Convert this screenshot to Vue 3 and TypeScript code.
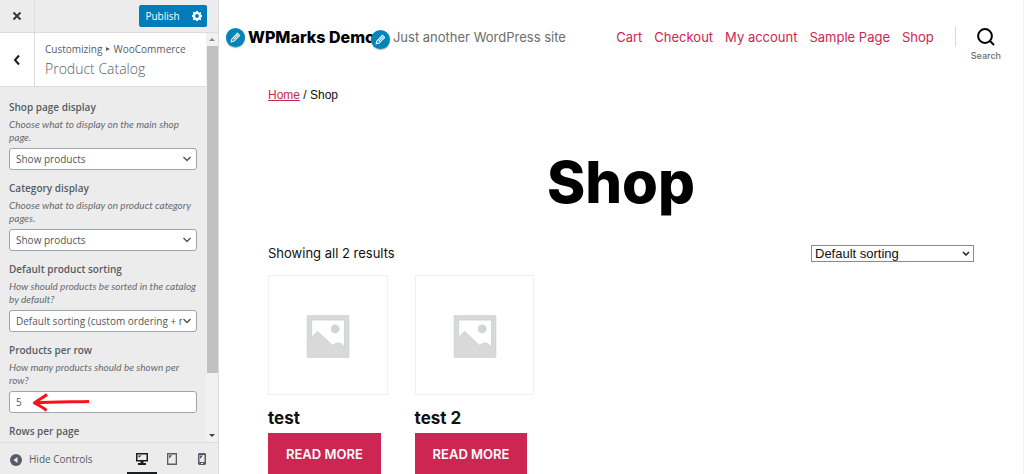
<script setup lang="ts">
import { ref } from 'vue'

interface Setting {
  id: string
  label: string
  help: string
  kind: 'select' | 'number'
  value: string
}

const settings = ref<Setting[]>([
  { id: 'shop-display', label: 'Shop page display', help: 'Choose what to display on the main shop page.', kind: 'select', value: 'Show products' },
  { id: 'category-display', label: 'Category display', help: 'Choose what to display on product category pages.', kind: 'select', value: 'Show products' },
  { id: 'default-sorting', label: 'Default product sorting', help: 'How should products be sorted in the catalog by default?', kind: 'select', value: 'Default sorting (custom ordering + name)' },
  { id: 'per-row', label: 'Products per row', help: 'How many products should be shown per row?', kind: 'number', value: '5' },
])
const links: string[] = ['Cart', 'Checkout', 'My account', 'Sample Page', 'Shop']
const products: string[] = ['test', 'test 2']
const sorting = ref('Default sorting')
</script>

<template>
  <div class="customizer">
    <aside class="sidebar">
      <header class="actions">
        <button class="close" type="button" aria-label="Close">
          <svg width="10" height="10" viewBox="0 0 10 10"><path d="M1.500 1.500l7 7M8.500 1.500l-7 7" /></svg>
        </button>
        <div class="publish-group">
          <button class="publish" type="button">Publish</button>
          <button class="gear" type="button" aria-label="Publish settings">
            <svg width="10" height="10" viewBox="0 0 20 20">
              <path fill="#fff" fill-rule="evenodd" d="M8 0h4l.6 2.800 1.700.7L16.500 2l2 2-1.300 2.300.8 1.700L20 8v4l-2.100.500-.7 1.700L18.500 16.500 16.500 18.500l-2.300-1.400-1.700.7L12 20H8l-.6-2.200-1.700-.7L3.500 18.500l-2-2 1.300-2.300-.7-1.700L0 12V8l2.100-.500.7-1.700L1.500 3.500l2-2 2.200 1.400 1.700-.7zM10 6.200a3.800 3.800 0 100 7.600 3.800 3.800 0 000-7.600z" />
            </svg>
          </button>
        </div>
      </header>

      <div class="panel-wrap">
        <div class="panel">
          <div class="panel-head">
            <button class="back" type="button" aria-label="Back">
              <svg width="8" height="12" viewBox="0 0 8 12"><path d="M6 1.500L2 6l4 4.500" /></svg>
            </button>
            <div class="titles">
              <p class="crumb">Customizing <span class="tri"></span> WooCommerce</p>
              <h3>Product Catalog</h3>
            </div>
          </div>
          <form class="settings" @submit.prevent>
            <div v-for="s in settings" :key="s.id" class="setting">
              <label :for="s.id">{{ s.label }}</label>
              <p class="help">{{ s.help }}</p>
              <div v-if="s.kind === 'select'" class="select">
                <select :id="s.id" v-model="s.value"><option>{{ s.value }}</option></select>
                <svg class="chev" width="10" height="6" viewBox="0 0 10 6"><path d="M1.500 1L5 4.500 8.500 1" /></svg>
              </div>
              <div v-else class="number">
                <input :id="s.id" v-model="s.value" type="text" inputmode="numeric">
                <svg class="arrow" width="58" height="20" viewBox="0 0 58 20"><path d="M57 9.500C40 10 20 9.500 3 11M15 2.500C11 5.500 6 8 2.500 11c4 2 8 4 12 7.500" /></svg>
              </div>
            </div>
            <div class="setting"><h4>Rows per page</h4></div>
          </form>
        </div>
        <div class="scrollbar">
          <span class="up"></span>
          <span class="thumb"></span>
          <span class="down"></span>
        </div>
      </div>

      <footer class="bottom">
        <button class="hide" type="button">
          <svg width="12" height="12" viewBox="0 0 12 12"><circle cx="6" cy="6" r="6" fill="#555d66" /><path d="M7.500 3v6L3.500 6z" fill="#eee" /></svg>
          Hide Controls
        </button>
        <div class="devices">
          <button class="device active" type="button" aria-label="Desktop">
            <svg width="12" height="12" viewBox="0 0 12 12"><path fill="#191e23" fill-rule="evenodd" d="M0 0h12v8.500H7.500V10H10v2H2v-2h2.500V8.500H0zM1.500 1.500V7h9V1.500zM2.500 2.500H6L2.500 4.500z" /></svg>
          </button>
          <button class="device" type="button" aria-label="Tablet">
            <svg width="10" height="12" viewBox="0 0 10 12"><path fill="#555d66" fill-rule="evenodd" d="M0 0h10v12H0zM1.300 1.500v9h7.400v-9zM2 2.200h3.500L2 5.500z" /></svg>
          </button>
          <button class="device" type="button" aria-label="Mobile">
            <svg width="8" height="12" viewBox="0 0 8 12"><path fill="#555d66" fill-rule="evenodd" d="M1 0h6l1 1v10l-1 1H1l-1-1V1zM1.500 2v7h5V2zM2 2.500h3L2 6zM3 10v1h2v-1z" /></svg>
          </button>
        </div>
      </footer>
    </aside>

    <main class="preview">
      <header class="site-head">
        <div class="brand">
          <div class="site-title">
            <button class="edit" type="button" aria-label="Edit site title">
              <svg width="13" height="13" viewBox="0 0 12 12"><path d="M2 10l.7-2.700L7.800 2.200l2 2L4.700 9.300zM6.700 3.300l2 2M4.300 7.700L7 5" /></svg>
            </button>
            <a href="#">WPMarks Demo</a>
          </div>
          <div class="tagline">
            <button class="edit" type="button" aria-label="Edit tagline">
              <svg width="13" height="13" viewBox="0 0 12 12"><path d="M2 10l.7-2.700L7.800 2.200l2 2L4.700 9.300zM6.700 3.300l2 2M4.300 7.700L7 5" /></svg>
            </button>
            Just another WordPress site
          </div>
        </div>
        <nav>
          <a v-for="l in links" :key="l" href="#">{{ l }}</a>
        </nav>
        <button class="search" type="button">
          <svg width="18" height="18" viewBox="0 0 18 18"><circle cx="8" cy="8" r="6.900" /><path d="M13 13l4 4" /></svg>
          <span>Search</span>
        </button>
      </header>

      <div class="content">
        <p class="trail"><a href="#">Home</a> / Shop</p>
        <h1>Shop</h1>
        <div class="toolbar">
          <p>Showing all 2 results</p>
          <div class="sort">
            <select v-model="sorting" aria-label="Shop order"><option>Default sorting</option></select>
            <svg width="8" height="5" viewBox="0 0 8 5"><path d="M1 1l3 3 3-3" /></svg>
          </div>
        </div>
        <ul class="products">
          <li v-for="p in products" :key="p">
            <div class="thumbnail">
              <svg viewBox="0 0 120 120">
                <path fill="#d8d9db" fill-rule="evenodd" d="M39 40.500h42.500V83H39zM43.500 45v17.500l6-6L65 71c4-4 8-3.500 12 1.500V45z" />
                <circle cx="67.500" cy="54" r="4.500" fill="#d3d4d6" />
                <path fill="none" stroke="#c6c8ca" stroke-width=".7" d="M39 40.500h42.500V83H39zM43.500 45H77v27.500c-4-5-8-5.500-12-1.500L49.500 56.500l-6 6z" />
              </svg>
            </div>
            <h2>{{ p }}</h2>
            <a class="more" href="#">READ MORE</a>
          </li>
        </ul>
      </div>
    </main>
  </div>
</template>

<style>
body { margin: 0; overflow: hidden; }
</style>

<style scoped>
* { box-sizing: border-box; }
p, h1, h2, h3, h4, ul { margin: 0; padding: 0; }
button { border: 0; background: none; padding: 0; font: inherit; color: inherit; cursor: pointer; }
svg { display: block; flex: none; }
a { color: #cd2653; text-decoration: none; }

.customizer { display: grid; grid-template-columns: 219px 1fr; height: 100vh; background: #fff; }

.sidebar { display: flex; flex-direction: column; min-height: 0; background: #ececec; border-right: 1px solid #ddd; color: #555d66; font: 10px/13px "Open Sans", "Noto Sans", sans-serif; }
.actions { display: flex; justify-content: space-between; align-items: center; height: 33px; padding-right: 11px; border-bottom: 1px solid #ddd; }
.close { display: grid; place-items: center; width: 35px; height: 32px; border-right: 1px solid #ddd; }
.close path { fill: none; stroke: #32373c; stroke-width: 2; }
.publish-group { display: flex; height: 22px; border-radius: 2px; background: #007cba; color: #fff; }
.publish { width: 47px; }
.gear { display: grid; place-items: center; width: 21px; }
.panel-wrap { display: flex; flex: 1; min-height: 0; }
.panel { flex: 1; min-width: 0; overflow: hidden; }
.panel-head { display: flex; height: 54px; background: #fff; border-bottom: 1px solid #ddd; }
.back { display: grid; place-items: center; width: 35px; border-right: 1px solid #ddd; }
.back path { fill: none; stroke: #191e23; stroke-width: 2; }
.titles { padding: 9px 0 0 10px; white-space: nowrap; }
.crumb { line-height: 15px; }
.tri { display: inline-block; margin: 0 1px; border: 2px solid transparent; border-left: 4px solid #555d66; border-right: 0; vertical-align: 2px; }
h3 { font-size: 14px; line-height: 24px; font-weight: 300; }
.settings { padding: 13px 9px 0; }
.setting { margin-bottom: 11px; }
label, h4 { display: block; font-size: 10px; line-height: 15px; font-weight: 600; }
.help { margin: 3px 0 4px; font: italic 10px/13px Lato, "Open Sans", sans-serif; color: #666b70; }
.setting select, .setting input { display: block; width: 100%; height: 22px; padding: 0 14px 0 6px; border: 1px solid #a0a5aa; border-radius: 3px; background: #fff; color: #50575e; font: inherit; appearance: none; }
.select, .number { position: relative; }
.chev { position: absolute; right: 5px; top: 8px; }
.chev path { fill: none; stroke: #555; stroke-width: 1.500; }
.arrow { position: absolute; left: 23px; top: 1px; }
.arrow path { fill: none; stroke: #f8131b; stroke-width: 3; stroke-linejoin: round; }
.scrollbar { display: flex; flex-direction: column; align-items: center; width: 12px; background: #f1f1f1; }
.up { margin: 5px 0; border: 3px solid transparent; border-top: 0; border-bottom: 3px solid #888; }
.thumb { width: 11px; flex: 0 0 80%; background: #c1c1c1; }
.down { margin: auto 0 5px; border: 3px solid transparent; border-bottom: 0; border-top: 3px solid #444; }
.bottom { display: flex; justify-content: space-between; height: 32px; border-top: 1px solid #ddd; }
.hide { display: flex; align-items: center; gap: 7px; padding: 2px 0 0 10px; }
.devices { display: flex; padding-right: 1px; }
.device { display: grid; place-items: center; width: 30px; padding-top: 2px; border-bottom: 2px solid transparent; }
.device.active { border-color: #191e23; }

.preview { min-width: 0; overflow: hidden; border-right: 1px solid #f3f3f3; color: #111; font-family: Inter, sans-serif; }
.site-head { display: flex; align-items: center; height: 73px; padding: 0 22px 0 29px; }
.brand { display: flex; align-items: center; gap: 18px; flex: 1; white-space: nowrap; }
.site-title, .tagline { position: relative; }
.site-title a { color: #000; font-size: 16px; line-height: 24px; font-weight: 800; }
.tagline { color: #6d6d6d; font-size: 13px; line-height: 20px; }
.edit { position: absolute; z-index: 1; left: -22px; top: 3px; display: grid; place-items: center; width: 19px; height: 19px; border-radius: 50%; background: #0085ba; box-shadow: 0 1px 1px #9ab; }
.edit path { fill: none; stroke: #fff; stroke-width: 1; }
nav { display: flex; gap: 12px; padding-right: 21px; font-size: 13px; line-height: 20px; white-space: nowrap; }
.search { display: flex; flex-direction: column; align-items: center; gap: 4px; padding: 15px 0 0 16px; color: #6d6d6d; font-size: 9px; line-height: 11px; font-weight: 500; background: linear-gradient(#dcd7ca, #dcd7ca) 0 14px / 1px 20px no-repeat; }
.search circle, .search path { fill: none; stroke: #000; stroke-width: 2; }
.content { padding: 14px 49px 0; }
.trail { font-family: "Liberation Sans", Arial, sans-serif; font-size: 12px; line-height: 16px; }
.trail a { text-decoration: underline; }
h1 { margin-top: 40px; color: #000; font-size: 58px; line-height: 78px; font-weight: 800; text-align: center; }
.toolbar { display: flex; justify-content: space-between; align-items: center; height: 24px; margin-top: 20px; font-size: 13px; }
.sort { position: relative; width: 163px; }
.sort select { display: block; width: 100%; height: 17px; padding: 0 3px; border: 1px solid #8a8a8a; border-radius: 0; background: #fff; color: #111; font: 13px/15px "Liberation Sans", Arial, sans-serif; appearance: none; }
.sort svg { position: absolute; right: 4px; top: 6px; }
.sort path { fill: none; stroke: #222; stroke-width: 1.500; }
.products { display: grid; grid-template-columns: repeat(5, 1fr); gap: 27px; margin-top: 10px; list-style: none; }
.thumbnail { border: 1px solid #f0f0f0; }
.thumbnail svg { width: 100%; }
h2 { margin: 11px 0 3px; font-size: 17px; line-height: 24px; font-weight: 700; }
.more { display: inline-block; padding: 0 18px; background: #cd2653; color: #fff; font-size: 13px; line-height: 42px; font-weight: 600; white-space: nowrap; }
</style>
